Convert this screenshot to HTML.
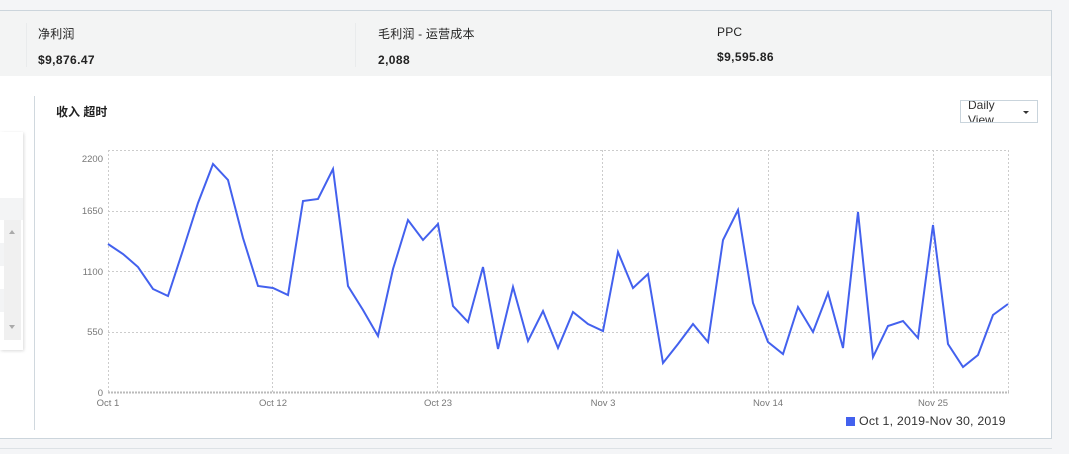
<!DOCTYPE html>
<html><head><meta charset="utf-8"><style>
*{margin:0;padding:0;box-sizing:border-box}
body{width:1069px;height:454px;background:#f4f5f7;position:relative;overflow:hidden;font-family:"Liberation Sans","Noto Sans CJK SC",sans-serif;color:#222}
.wrap{position:absolute;left:-2px;top:10px;width:1054px;height:429px;border:1px solid #ccd5dc;background:#fff}
.stats{position:absolute;left:0;top:0;width:100%;height:65px;background:#f3f4f4}
.st{position:absolute;top:14px;font-size:12px;letter-spacing:0.2px}
.st .v{font-weight:bold;margin-top:11px;font-size:12px;letter-spacing:0.4px}
.sep{position:absolute;top:12px;width:1px;height:44px;background:#e9ebec}
.title{position:absolute;left:56px;top:103px;font-size:12px;font-weight:bold}
.sel{position:absolute;left:960px;top:100px;width:78px;height:23px;border:1px solid #c9d4dc;font-size:12px;line-height:15px;padding-left:7px;overflow:hidden;color:#333;padding-top:0}
.sel span{display:block;margin-top:-3px}
.sel:after{content:"";position:absolute;right:8px;top:10px;border:3px solid transparent;border-top:3px solid #333}
.card{position:absolute;left:0;top:132px;width:23px;height:218px;background:#fff;box-shadow:1px 1px 3px rgba(0,0,0,.15)}
.vline{position:absolute;left:34px;top:96px;width:1px;height:334px;background:#d0d8de}
.leg{position:absolute;left:846px;top:414px;font-size:12.4px;color:#333;letter-spacing:0.2px}
.leg i{display:inline-block;width:9px;height:9px;background:#4361ee;margin-right:4px;vertical-align:-1px}
.bottom{position:absolute;left:0;top:448px;width:1052px;height:1px;background:#dde2e6}
</style></head><body>
<div class="wrap">
<div class="stats">
<div class="sep" style="left:27px"></div>
<div class="st" style="left:39px">净利润<div class="v">$9,876.47</div></div>
<div class="sep" style="left:356px"></div>
<div class="st" style="left:379px">毛利润 - 运营成本<div class="v">2,088</div></div>
<div class="st" style="left:718px">PPC<div class="v">$9,595.86</div></div>
</div>
</div>
<div class="card">
<div style="position:absolute;left:0;top:66px;width:23px;height:22px;background:#f3f4f5"></div>
<div style="position:absolute;left:0;top:88px;width:4px;height:120px;background:#fff"></div>
<div style="position:absolute;left:4px;top:88px;width:17px;height:120px;background:#f0f0f0"></div>
<div style="position:absolute;left:0;top:111px;width:4px;height:23px;background:#f3f4f5"></div>
<div style="position:absolute;left:0;top:157px;width:4px;height:23px;background:#f3f4f5"></div>
<div style="position:absolute;left:9px;top:95px;border:3px solid transparent;border-bottom:4px solid #aaa"></div>
<div style="position:absolute;left:9px;top:193px;border:3px solid transparent;border-top:4px solid #aaa"></div>
</div>
<div class="vline"></div>
<div class="title">收入 超时</div>
<div class="sel"><span>Daily<br>View</span></div>
<svg style="position:absolute;left:0;top:0" width="1069" height="454">
<g stroke="#ccc" stroke-dasharray="2,2" stroke-width="1" fill="none">
<line x1="108" y1="150.5" x2="1008" y2="150.5"/>
<line x1="108" y1="211.5" x2="1008" y2="211.5"/>
<line x1="108" y1="271.5" x2="1008" y2="271.5"/>
<line x1="108" y1="332.5" x2="1008" y2="332.5"/>
<line x1="108.5" y1="150" x2="108.5" y2="392"/>
<line x1="272.5" y1="150" x2="272.5" y2="392"/>
<line x1="437.5" y1="150" x2="437.5" y2="392"/>
<line x1="602.5" y1="150" x2="602.5" y2="392"/>
<line x1="768.5" y1="150" x2="768.5" y2="392"/>
<line x1="933.5" y1="150" x2="933.5" y2="392"/>
<line x1="1008.5" y1="150" x2="1008.5" y2="392"/>
</g>
<line x1="108" y1="392.5" x2="1009" y2="392.5" stroke="#bbb" stroke-width="2" stroke-dasharray="2,1"/>
<g font-family="Liberation Sans,sans-serif" font-size="9.5" fill="#777">
<text x="103" y="162" text-anchor="end">2200</text>
<text x="103" y="214" text-anchor="end">1650</text>
<text x="103" y="275" text-anchor="end">1100</text>
<text x="103" y="335" text-anchor="end">550</text>
<text x="103" y="396" text-anchor="end">0</text>
<text x="108" y="406" text-anchor="middle">Oct 1</text>
<text x="273" y="406" text-anchor="middle">Oct 12</text>
<text x="438" y="406" text-anchor="middle">Oct 23</text>
<text x="603" y="406" text-anchor="middle">Nov 3</text>
<text x="768" y="406" text-anchor="middle">Nov 14</text>
<text x="933" y="406" text-anchor="middle">Nov 25</text>
</g>
<polyline fill="none" stroke="#4361ee" stroke-width="2" stroke-linejoin="miter" points="108,244 123,254 138,267 153,289 168,296 183,250 198,203 213,164 228,180 243,238 258,286 273,288 288,295 303,201 318,199 333,169 348,286 363,310 378,336 393,269 408,220 423,240 438,224 453,306 468,322 483,267 498,349 513,287 528,341 543,311 558,348 573,312 588,324 603,331 618,252 633,288 648,274 663,363 678,344 693,324 708,342 723,240 738,210 753,303 768,342 783,354 798,307 813,332 828,293 843,348 858,212 873,357 888,326 903,321 918,338 933,225 948,344 963,367 978,355 993,315 1008,304"/>
</svg>
<div class="leg"><i></i>Oct 1, 2019-Nov 30, 2019</div>
<div class="bottom"></div>
</body></html>
